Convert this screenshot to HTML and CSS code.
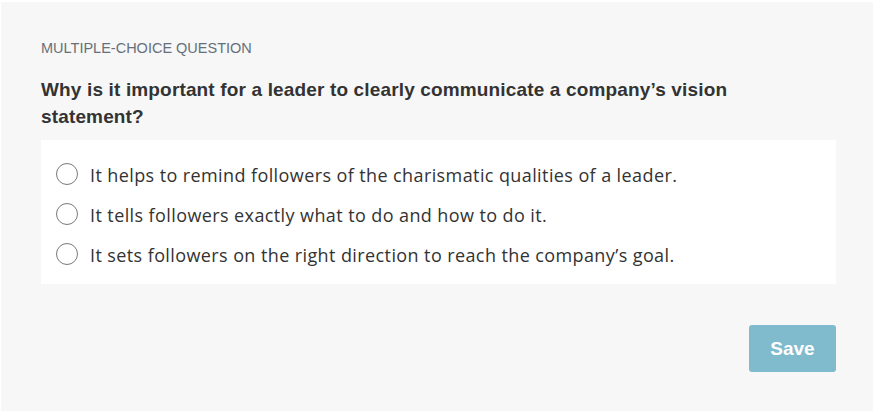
FILE: index.html
```html
<!DOCTYPE html>
<html>
<head>
<meta charset="utf-8">
<link rel="stylesheet" href="styles.css">
</head>
<body>
<div class="panel">
  <div class="label">MULTIPLE-CHOICE QUESTION</div>
  <div class="question">Why is it important for a leader to clearly communicate a company’s vision statement?</div>
  <div class="options">
    <label class="option"><span class="radio"></span><span class="text">It helps to remind followers of the charismatic qualities of a leader.</span></label>
    <label class="option"><span class="radio"></span><span class="text">It tells followers exactly what to do and how to do it.</span></label>
    <label class="option"><span class="radio"></span><span class="text">It sets followers on the right direction to reach the company’s goal.</span></label>
  </div>
  <div class="actions">
    <button class="save">Save</button>
  </div>
</div>
</body>
</html>
```
FILE: styles.css
```css
html, body {
  margin: 0;
  padding: 0;
  background: #ffffff;
}
body {
  padding: 2px 2px 3px 1px;
  font-family: "Liberation Sans", Arial, sans-serif;
}
.panel {
  background: #f7f7f7;
  height: 409px;
  box-sizing: border-box;
  padding: 38px 37px 0 40px;
}
.label {
  font-size: 14.5px;
  color: #67707a;
  line-height: 16px;
}
.question {
  margin-top: 20px;
  font-size: 19px;
  font-weight: bold;
  letter-spacing: 0.15px;
  color: #333333;
  line-height: 27px;
  padding-right: 90px;
}
.options {
  margin-top: 10px;
  background: #ffffff;
  padding: 23px 15px 19px 15px;
  display: flex;
  flex-direction: column;
  gap: 18px;
}
.option {
  display: flex;
  align-items: center;
  gap: 12px;
  height: 22px;
}
.radio {
  width: 20px;
  height: 20px;
  border: 1px solid #7a7a7a;
  border-radius: 50%;
  background: #fff;
  flex: none;
}
.text {
  font-family: "Open Sans", "Liberation Sans", sans-serif;
  font-size: 18px;
  letter-spacing: 0.4px;
  color: #333333;
  position: relative;
  top: 1px;
}
.actions {
  display: flex;
  justify-content: flex-end;
  margin-top: 41px;
}
.save {
  width: 87px;
  height: 47px;
  border: none;
  border-radius: 3px;
  background: #7fbacd;
  color: #ffffff;
  font-family: "Liberation Sans", Arial, sans-serif;
  font-size: 19px;
  font-weight: bold;
}
```
